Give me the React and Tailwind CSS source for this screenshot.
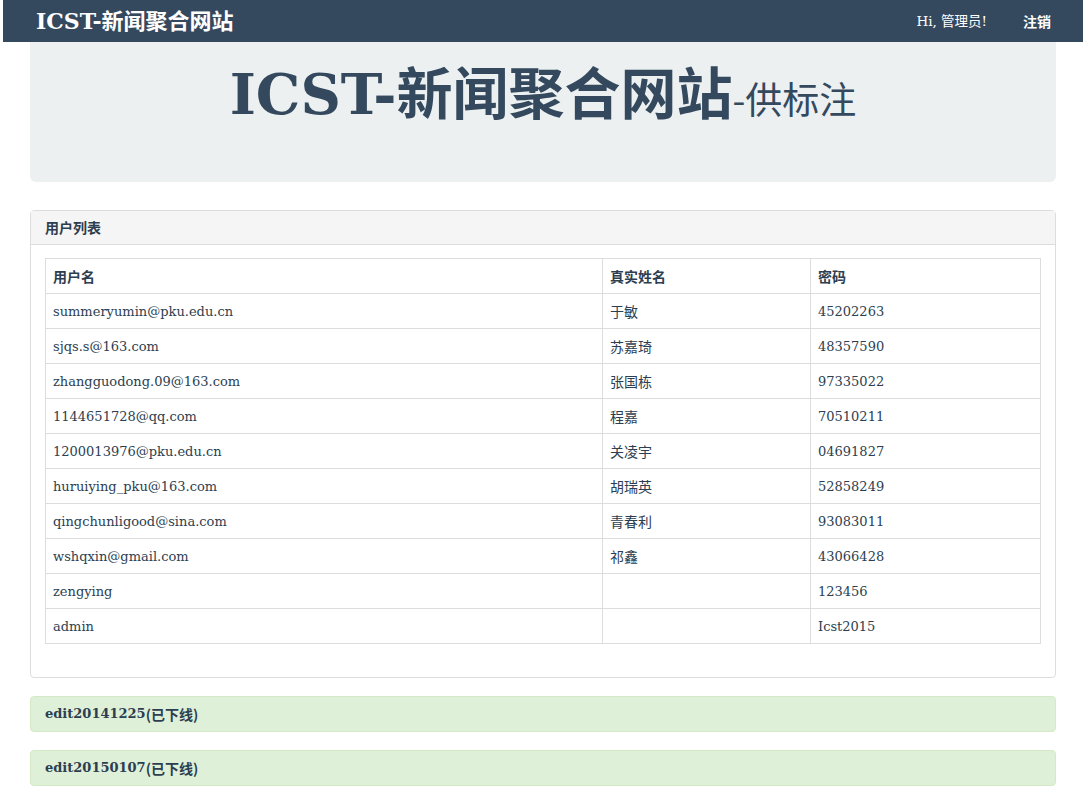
const users = [
  ["summeryumin@pku.edu.cn", "于敏", "45202263"],
  ["sjqs.s@163.com", "苏嘉琦", "48357590"],
  ["zhangguodong.09@163.com", "张国栋", "97335022"],
  ["1144651728@qq.com", "程嘉", "70510211"],
  ["1200013976@pku.edu.cn", "关凌宇", "04691827"],
  ["huruiying_pku@163.com", "胡瑞英", "52858249"],
  ["qingchunligood@sina.com", "青春利", "93083011"],
  ["wshqxin@gmail.com", "祁鑫", "43066428"],
  ["zengying", "", "123456"],
  ["admin", "", "Icst2015"],
]

const serif = "font-['DejaVu_Serif','Noto_Sans_CJK_SC',serif]"
const cjk = "font-['Noto_Sans_CJK_SC',sans-serif]"

export default function App() {
  return (
    <div className={`min-h-screen bg-white text-[#2c3e50] ${serif}`}>
      {/* Navbar */}
      <nav className="ml-[3px] flex h-[42px] w-[1080px] items-center justify-between bg-[#34495e] pl-[33px] pr-[32px] text-white">
        <span className="text-[22px] font-bold">ICST-新闻聚合网站</span>
        <div className="flex items-center gap-[36px] text-[13.5px]">
          <span>Hi, 管理员!</span>
          <span className={`${cjk} text-[14px] font-bold`}>注销</span>
        </div>
      </nav>

      <div className="ml-[30px] w-[1026px]">
        {/* Jumbotron */}
        <div className="flex h-[140px] justify-center rounded-b-md bg-[#ecf0f1] pt-[10px]">
          <h1 className="flex items-baseline text-[#34495e]">
            <span className="text-[56px] font-bold">ICST-新闻聚合网站</span>
            <span className={`${cjk} text-[37px] font-normal`}>-供标注</span>
          </h1>
        </div>

        {/* User list panel */}
        <div className="mt-[28px] rounded border border-[#dddddd]">
          <div className={`${cjk} flex h-[34px] items-center border-b border-[#dddddd] bg-[#f5f5f5] px-[14px] text-[14px] font-bold`}>
            用户列表
          </div>
          <div className="px-[14px] pt-[13px] pb-[33px]">
            <table className="w-full border-collapse border border-[#dddddd] text-[13px]">
              <thead className={cjk}>
                <tr className="h-[35px] text-[14px]">
                  <th className="w-[557px] border border-[#dddddd] px-[7px] text-left font-bold">用户名</th>
                  <th className="w-[208px] border border-[#dddddd] px-[7px] text-left font-bold">真实姓名</th>
                  <th className="border border-[#dddddd] px-[7px] text-left font-bold">密码</th>
                </tr>
              </thead>
              <tbody>
                {users.map((u) => (
                  <tr key={u[0]} className="h-[35px]">
                    <td className="border border-[#dddddd] px-[7px] pt-[2px]">{u[0]}</td>
                    <td className={`${cjk} border border-[#dddddd] px-[7px] text-[14px]`}>{u[1]}</td>
                    <td className="border border-[#dddddd] px-[7px] pt-[2px]">{u[2]}</td>
                  </tr>
                ))}
              </tbody>
            </table>
          </div>
        </div>

        {/* Offline editors */}
        <div className="mt-[18px] flex h-[36px] items-center rounded border border-[#d6e9c6] bg-[#dff0d8] px-[14px] text-[13px] font-bold">
          edit20141225<span className={`${cjk} text-[14px]`}>(已下线)</span>
        </div>
        <div className="mt-[18px] flex h-[36px] items-center rounded border border-[#d6e9c6] bg-[#dff0d8] px-[14px] text-[13px] font-bold">
          edit20150107<span className={`${cjk} text-[14px]`}>(已下线)</span>
        </div>
      </div>
    </div>
  )
}
